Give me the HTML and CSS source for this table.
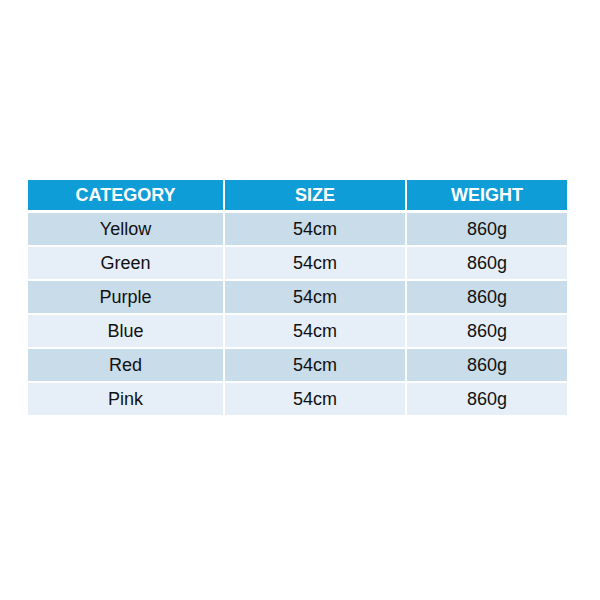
FILE: index.html
```html
<!DOCTYPE html>
<html>
<head>
<meta charset="utf-8">
<link rel="stylesheet" href="styles.css">
</head>
<body>
<div class="table">
  <div class="cell head">CATEGORY</div>
  <div class="cell head">SIZE</div>
  <div class="cell head">WEIGHT</div>

  <div class="cell dark">Yellow</div>
  <div class="cell dark">54cm</div>
  <div class="cell dark">860g</div>

  <div class="cell light">Green</div>
  <div class="cell light">54cm</div>
  <div class="cell light">860g</div>

  <div class="cell dark">Purple</div>
  <div class="cell dark">54cm</div>
  <div class="cell dark">860g</div>

  <div class="cell light">Blue</div>
  <div class="cell light">54cm</div>
  <div class="cell light">860g</div>

  <div class="cell dark">Red</div>
  <div class="cell dark">54cm</div>
  <div class="cell dark">860g</div>

  <div class="cell light">Pink</div>
  <div class="cell light">54cm</div>
  <div class="cell light">860g</div>
</div>
</body>
</html>
```
FILE: styles.css
```css
html, body {
  margin: 0;
  padding: 0;
  background: #ffffff;
}
body {
  width: 600px;
  height: 600px;
  font-family: "Liberation Sans", Arial, sans-serif;
  padding-top: 180px;
  padding-left: 28px;
  box-sizing: border-box;
}
.table {
  display: grid;
  grid-template-columns: 195px 180px 160px;
  grid-template-rows: 31px repeat(6, 32px);
  column-gap: 2px;
  row-gap: 2px;
  width: 539px;
}
.cell {
  display: flex;
  align-items: center;
  justify-content: center;
  font-size: 18px;
  color: #111111;
}
.head {
  background: #0f9dd8;
  color: #ffffff;
  font-weight: bold;
  margin-bottom: 1px;
}
.dark {
  background: #c9dcea;
}
.light {
  background: #e6eef8;
}
```
